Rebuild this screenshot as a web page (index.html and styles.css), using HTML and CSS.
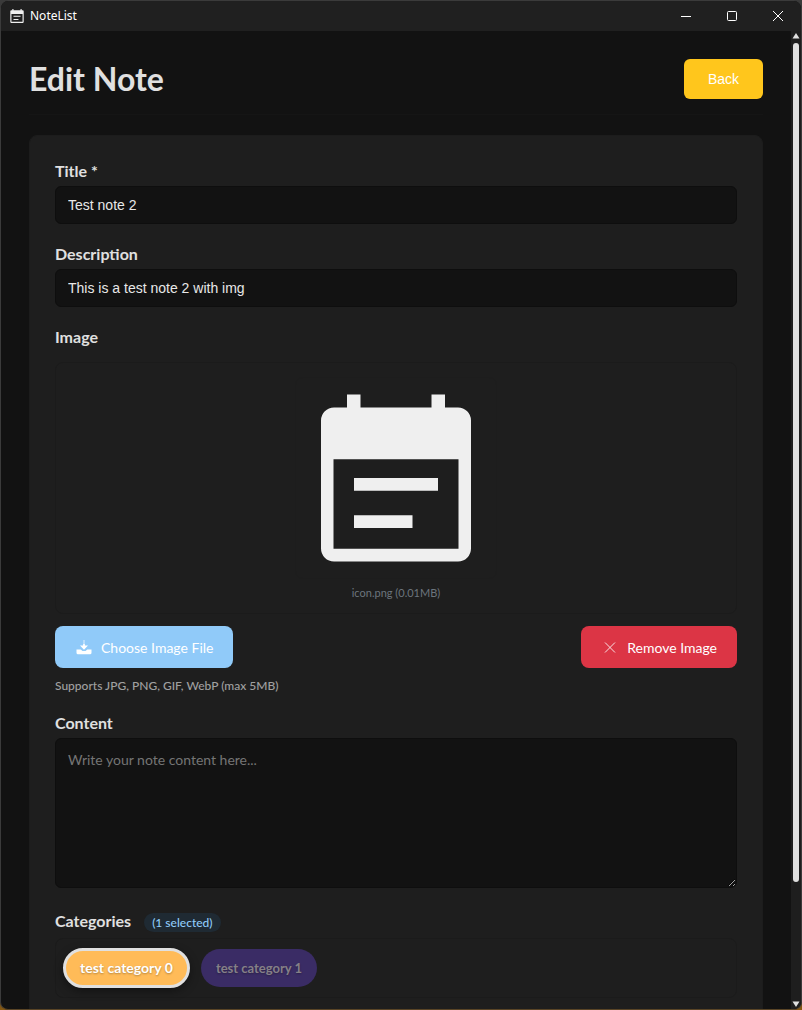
FILE: index.html
```html
<!DOCTYPE html>
<html lang="en">
<head>
<meta charset="utf-8">
<title>NoteList</title>
<link rel="stylesheet" href="styles.css">
</head>
<body>
<div class="window">
  <header class="titlebar">
    <svg class="app-icon" viewBox="0 0 24 24" aria-hidden="true"><path fill="#efefef" fill-rule="evenodd" d="M4 0h2v2h12V0h2v2h1.500a2 2 0 0 1 2 2v18a2 2 0 0 1-2 2h-19a2 2 0 0 1-2-2V4a2 2 0 0 1 2-2H4zM2.500 8.500v13.500h19V8.500zM6 11.500h12v1.700h-12zM6 17h8.500v1.700h-8.500z"/></svg>
    <span class="app-name">NoteList</span>
    <div class="window-controls">
      <button class="window-control" type="button" aria-label="Minimize"><svg width="12" height="12" viewBox="0 0 12 12"><path d="M1 6.500h10"/></svg></button>
      <button class="window-control" type="button" aria-label="Maximize"><svg width="12" height="12" viewBox="0 0 12 12"><rect x="1.500" y="1.500" width="9" height="9" rx="1"/></svg></button>
      <button class="window-control" type="button" aria-label="Close"><svg width="12" height="12" viewBox="0 0 12 12"><path d="M1 1l10 10M11 1L1 11"/></svg></button>
    </div>
  </header>
  <div class="viewport">
    <main class="page">
      <div class="page-header">
        <h1 class="page-title">Edit Note</h1>
        <button class="back-button" type="button">Back</button>
      </div>
      <form class="card">
        <div class="field">
          <label class="label" for="title">Title *</label>
          <input class="control" id="title" type="text" value="Test note 2">
        </div>
        <div class="field">
          <label class="label" for="description">Description</label>
          <input class="control" id="description" type="text" value="This is a test note 2 with img">
        </div>
        <div class="field">
          <span class="label" id="image-label">Image</span>
          <div class="preview" role="group" aria-labelledby="image-label">
            <svg class="preview-image" viewBox="0 0 200 200" role="img" aria-label="icon.png"><path fill="#efefef" fill-rule="evenodd" d="M51 16.500h13.500V29.500h71V16.500H149V29.500H162a13 13 0 0 1 13 13V170.500a13 13 0 0 1-13 13H38a13 13 0 0 1-13-13V42.500a13 13 0 0 1 13-13H51zM37.500 81.300V170.700H162.500V81.300zM58 100H142V112.700H58zM58 137.300H116.500V150H58z"/></svg>
            <span class="preview-caption">icon.png (0.01MB)</span>
          </div>
          <div class="image-actions">
            <button class="action choose" type="button"><svg width="16" height="16" viewBox="0 0 16 16" aria-hidden="true"><path fill="#fff" opacity=".5" d="M7.300 0h1.400v6H7.300z"/><path fill="#fff" d="M4 5.500h3.200V4h1.600v1.500H12L8 9.700zM.5 9.500h4.200L6.500 11h3l1.800-1.500h4.200v3.200a1.500 1.500 0 0 1-1.500 1.500H2a1.500 1.500 0 0 1-1.500-1.500z"/></svg>Choose Image File</button>
            <button class="action remove" type="button"><svg width="16" height="16" viewBox="0 0 16 16" aria-hidden="true"><path d="M3 2.500l10 10M13 2.500l-10 10" stroke="#fff" opacity=".85"/></svg>Remove Image</button>
          </div>
          <p class="hint">Supports JPG, PNG, GIF, WebP (max 5MB)</p>
        </div>
        <div class="field">
          <label class="label" for="content">Content</label>
          <textarea class="control content" id="content" placeholder="Write your note content here..."></textarea>
        </div>
        <div class="field">
          <div class="label category-label"><span id="categories-label">Categories</span><span class="count">(1 selected)</span></div>
          <div class="categories" role="group" aria-labelledby="categories-label">
            <button class="chip chip-orange" type="button" aria-pressed="true">test category 0</button>
            <button class="chip chip-purple" type="button" aria-pressed="false">test category 1</button>
          </div>
        </div>
      </form>
    </main>
    <div class="scrollbar" aria-hidden="true">
      <svg width="8" height="8" viewBox="0 0 8 8"><path d="M4 1l3.500 5.500h-7z"/></svg>
      <div class="track"><div class="thumb"></div></div>
      <svg width="8" height="8" viewBox="0 0 8 8"><path d="M4 7L.5 1.500h7z"/></svg>
    </div>
  </div>
</div>
</body>
</html>
```
FILE: styles.css
```css
* {
  box-sizing: border-box;
}

body {
  margin: 0;
  height: 100vh;
  overflow: hidden;
  background: linear-gradient(#3a3a3a 98%, #8a5a10);
  color: #e0e0e0;
  font: 14px/20px Lato, "Open Sans", sans-serif;
}

button {
  font: inherit;
  border: 0;
  cursor: pointer;
}

.window {
  display: flex;
  flex-direction: column;
  height: 100vh;
  overflow: hidden;
  border: 1px solid #3b3b3b;
  border-bottom-color: #5a4526;
  border-radius: 8px;
  background: #121212;
}

.titlebar {
  display: flex;
  flex: none;
  align-items: center;
  height: 30px;
  padding-left: 9px;
  background: #202020;
}

.app-icon {
  width: 14px;
  height: 14px;
}

.app-name {
  margin-left: 6px;
  color: #fff;
  font: 12px/16px "Noto Sans", "Open Sans", sans-serif;
}

.window-controls {
  display: flex;
  height: 100%;
  margin-left: auto;
}

.window-control {
  display: grid;
  place-items: center;
  width: 46px;
  padding: 0;
  background: none;
}

.window-control svg {
  fill: none;
  stroke: #fff;
}

.viewport {
  display: flex;
  flex: 1;
  min-height: 0;
}

.page {
  flex: 1;
  min-width: 0;
  overflow: hidden;
  padding: 28px;
}

.page-header {
  display: flex;
  align-items: center;
  justify-content: space-between;
  margin-bottom: 20px;
  padding-bottom: 15px;
  border-bottom: 1px solid #151515;
}

.page-title {
  margin: 0;
  font-size: 32px;
  line-height: 40px;
}

.back-button {
  height: 40px;
  padding: 0 24px;
  border-radius: 6px;
  background: #ffc61c;
  color: #fff;
  font: 14px/20px "Liberation Sans", sans-serif;
}

.card {
  display: flex;
  flex-direction: column;
  gap: 20px;
  padding: 25px;
  border: 1px solid #1c1c1c;
  border-radius: 8px;
  background: #1e1e1e;
}

.field {
  display: flex;
  flex-direction: column;
}

.label {
  margin-bottom: 5px;
  font-size: 16px;
  font-weight: 700;
  line-height: 20px;
}

.control {
  width: 100%;
  height: 38px;
  padding: 0 12px;
  border: 1px solid #0e0e0e;
  border-radius: 6px;
  outline: 0;
  background: #121212;
  color: #e8e8e8;
  font: 14px/20px "Liberation Sans", sans-serif;
}

.content {
  display: block;
  height: 150px;
  padding: 11px 12px;
  resize: vertical;
  font-family: Lato, sans-serif;
}

.content::placeholder {
  color: #757575;
}

.preview {
  display: flex;
  flex-direction: column;
  align-items: center;
  gap: 7px;
  margin-top: 10px;
  padding: 14px 14px 13px;
  border: 1px solid #1b1b1b;
  border-radius: 8px;
}

.preview-image {
  width: 202px;
  height: 202px;
  border: 1px solid #1d1d1d;
  border-radius: 8px;
}

.preview-caption {
  color: #6c757d;
  font-size: 11px;
  line-height: 14px;
}

.image-actions {
  display: flex;
  justify-content: space-between;
  margin-top: 12px;
}

.action {
  display: flex;
  align-items: center;
  gap: 9px;
  height: 42px;
  padding: 1px 20px 0 21px;
  border-radius: 8px;
  color: #fff;
}

.choose {
  background: #90caf9;
}

.remove {
  background: #dc3545;
}

.hint {
  margin: 10px 0 0;
  color: #a0a0a0;
  font-size: 12px;
  font-weight: 500;
  line-height: 15px;
}

.category-label {
  display: flex;
  align-items: center;
  gap: 13px;
  margin-bottom: 4px;
  line-height: 26px;
}

.count {
  margin-top: 2px;
  padding: 0 8px;
  border-radius: 12px;
  background: #1f2a33;
  color: #90caf9;
  font-size: 12px;
  font-weight: 500;
  line-height: 19px;
}

.categories {
  display: flex;
  align-items: center;
  gap: 11px;
  padding: 9px 7px;
  border: 1px solid #1b1b1b;
  border-radius: 8px;
}

.chip {
  height: 38px;
  padding: 0 15px;
  border-radius: 20px;
  color: #fff;
  font-size: 13px;
  font-weight: 700;
  text-shadow: 0 1px 2px rgba(0, 0, 0, 0.3);
}

.chip[aria-pressed="true"] {
  height: 40px;
  padding: 0 14px;
  border: 3px solid #e0e0e0;
  font-size: 14px;
  box-shadow: 0 3px 10px rgba(0, 0, 0, 0.4);
}

.chip-orange {
  background: #ffbb58;
}

.chip-purple {
  background: #3a2c65;
  color: #858087;
}

.scrollbar {
  display: flex;
  flex: none;
  flex-direction: column;
  align-items: center;
  width: 10px;
  padding: 1px 0;
  background: #1e1e1e;
}

.scrollbar svg {
  fill: #e0e0e0;
}

.track {
  flex: 1;
  width: 6px;
  padding-top: 3px;
}

.thumb {
  height: 87.7%;
  border-radius: 3px;
  background: #e0e0e0;
}
```
